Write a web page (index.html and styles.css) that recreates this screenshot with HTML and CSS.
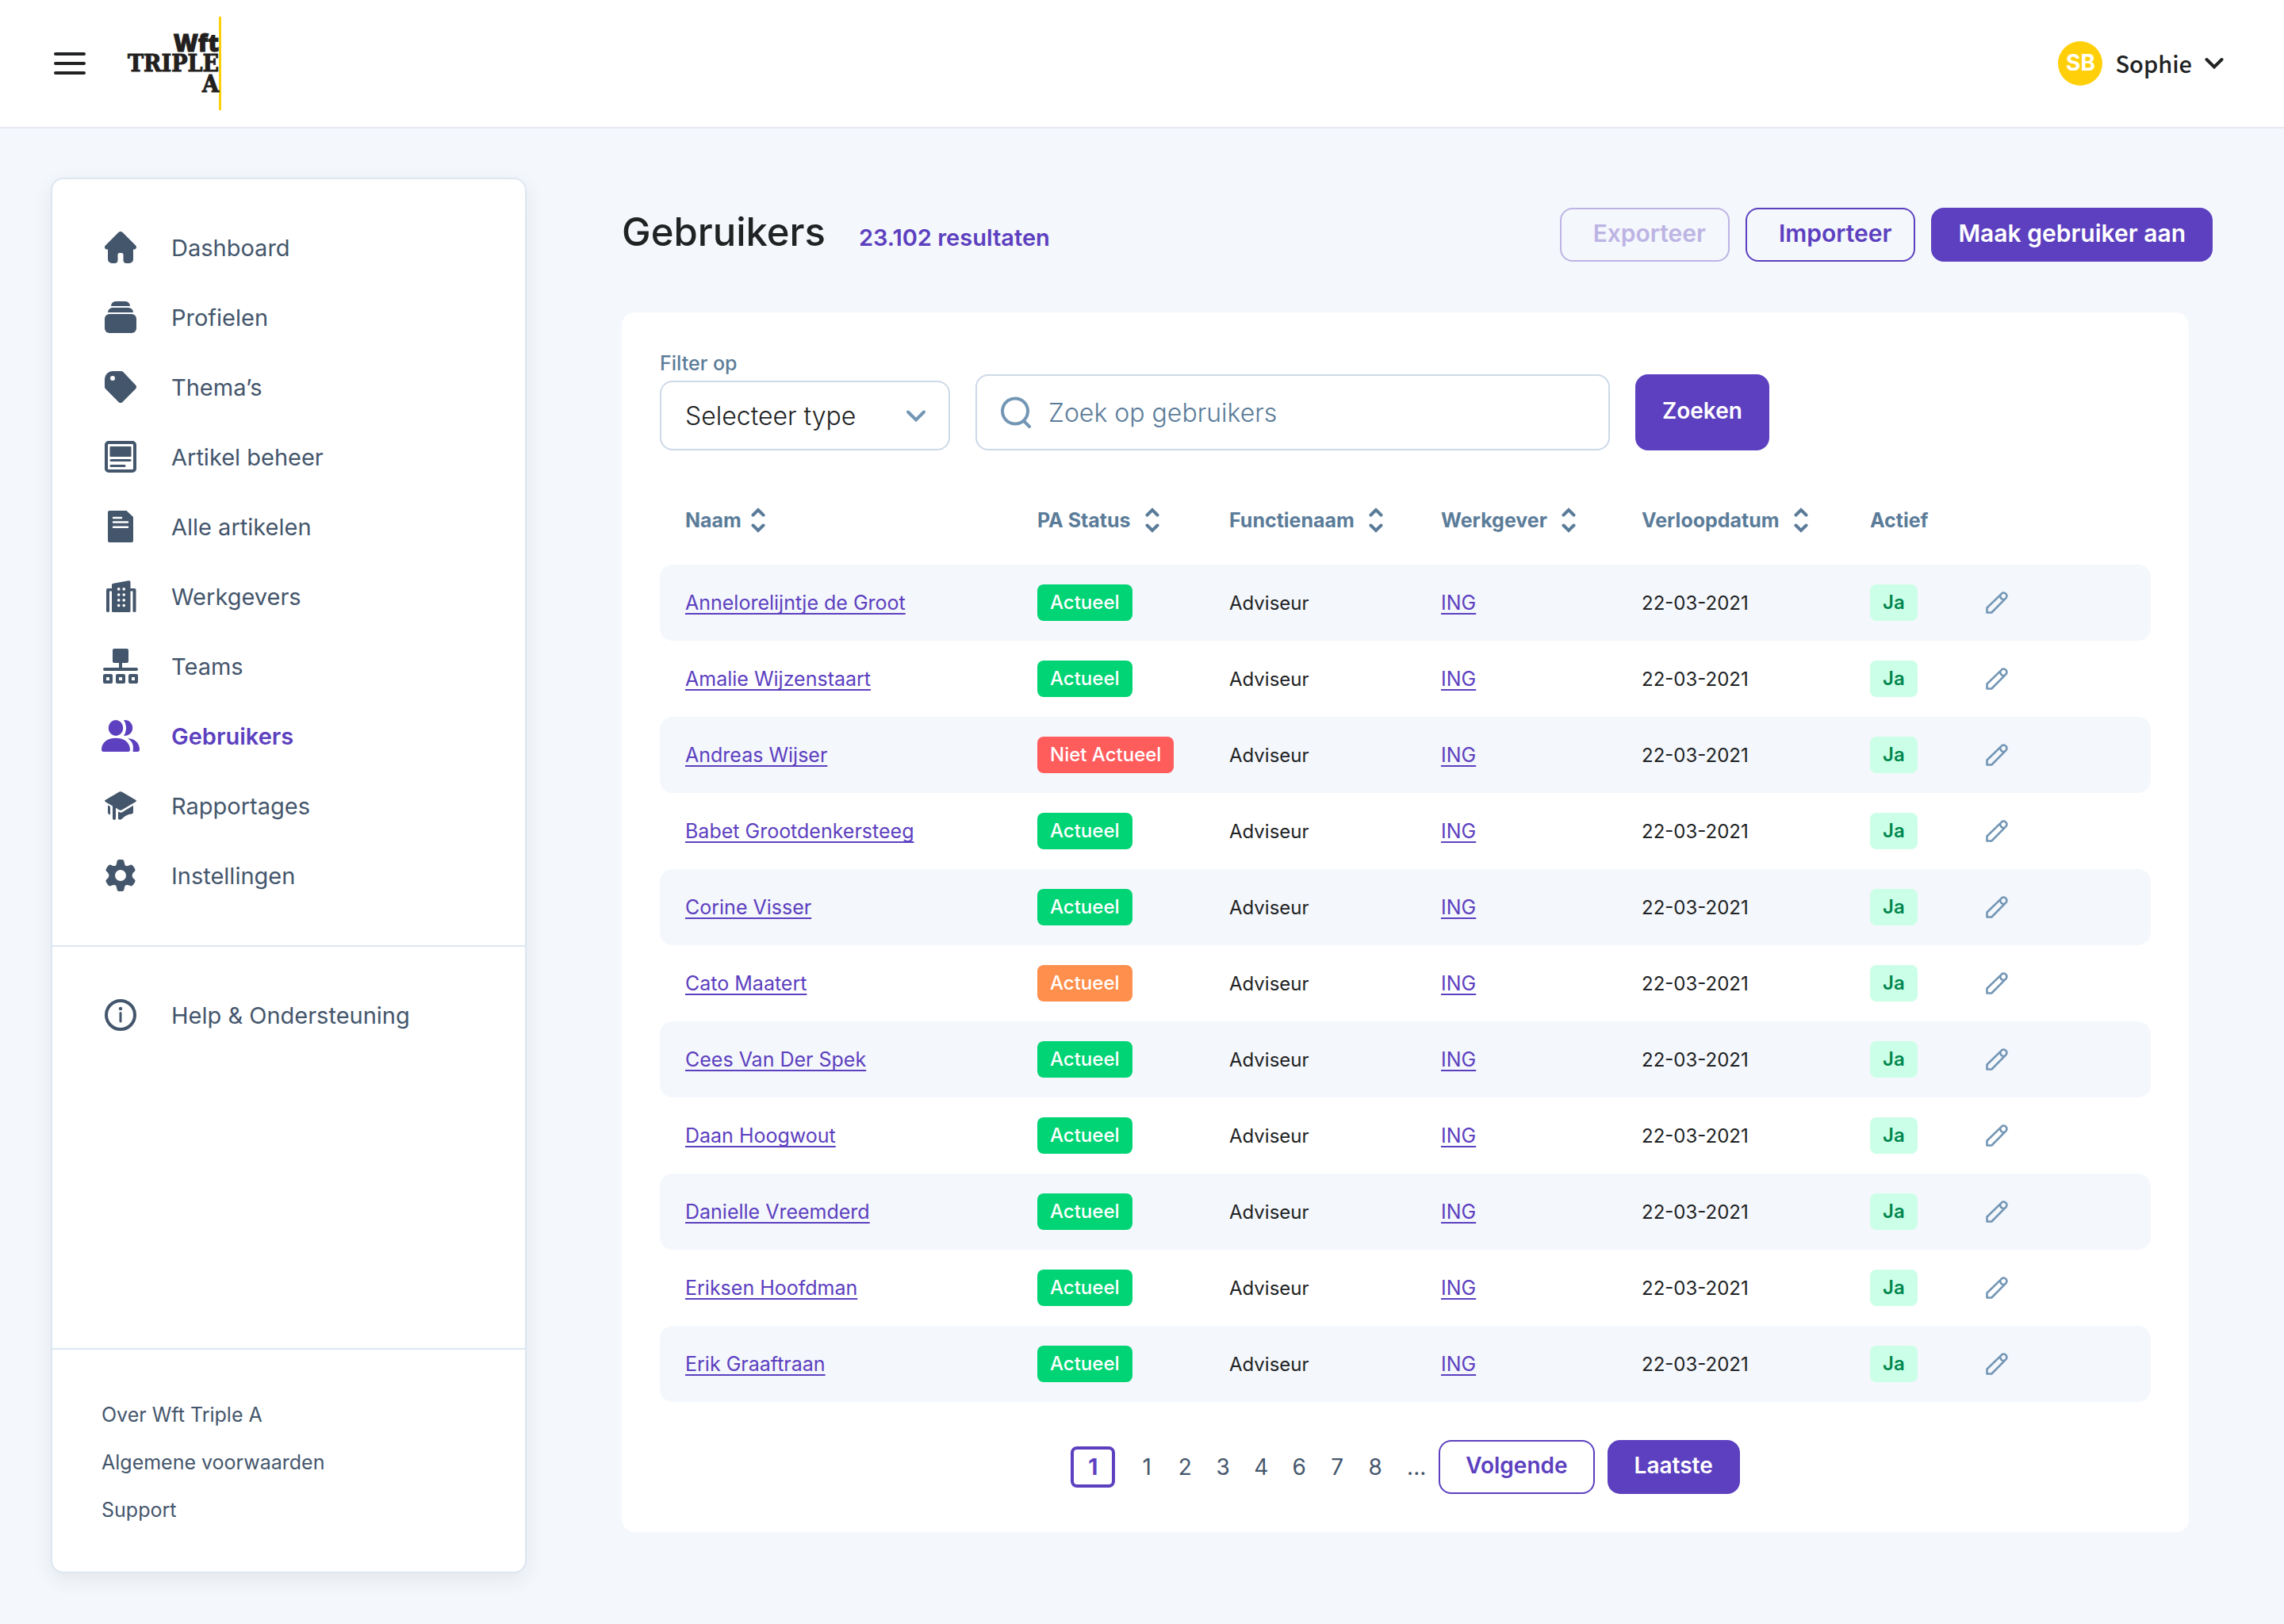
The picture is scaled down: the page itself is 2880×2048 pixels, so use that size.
FILE: index.html
```html
<!DOCTYPE html>
<html lang="nl">
<head>
    <meta charset="UTF-8">
    <meta name="viewport" content="width=device-width, initial-scale=1.0">
    <title>Gebruikers - Wft Triple A</title>
    <link rel="stylesheet" href="styles.css">
</head>
<body>
    <!-- shared icons -->
    <svg class="sprite" aria-hidden="true">
        <symbol id="icon-sort" viewBox="0 0 18 32">
            <path d="M2.5 9.5 9 3l6.5 6.5M2.5 22.5 9 29l6.5-6.5" fill="none" stroke="currentColor" stroke-width="4" stroke-linecap="round"/>
        </symbol>
        <symbol id="icon-pencil" viewBox="0 0 28 28">
            <path d="M1.5 26.5V20.5L20 2.6a3.9 3.9 0 0 1 5.5 5.5L7.3 26.5zM18.3 4.6c-.6 3.2 1.8 5.8 5 5.3" fill="none" stroke="currentColor" stroke-width="2.6" stroke-linejoin="round"/>
        </symbol>
    </svg>

    <header class="topbar">
        <button class="menu-button" aria-label="Menu">
            <svg width="40" height="28" viewBox="0 0 40 28">
                <path d="M2 2h36M2 14h36M2 26h36" stroke="currentColor" stroke-width="4" stroke-linecap="round"/>
            </svg>
        </button>
        <a href="#" class="logo">
            <span class="logo-small">Wft</span>
            <span>TRIPLE</span>
            <span>A</span>
        </a>
        <button class="user">
            <span class="avatar">SB</span>
            <span class="user-name">Sophie</span>
            <svg width="24" height="16" viewBox="0 0 24 16">
                <path d="M2.5 3 12 12.5 21.5 3" fill="none" stroke="currentColor" stroke-width="4" stroke-linecap="round"/>
            </svg>
        </button>
    </header>

    <div class="layout">
        <aside class="sidebar">
            <nav class="nav">
                <a href="#" class="nav-link">
                    <svg class="nav-icon" viewBox="0 0 48 48"><path d="M21.2 5.2a3.8 3.8 0 0 1 5.6 0L43 21.6c2 2.2.8 5-2 5h-1V39a5 5 0 0 1-5 5h-3.500a4 4 0 0 1-4-4v-7a2 2 0 0 0-2-2h-3a2 2 0 0 0-2 2v7a4 4 0 0 1-4 4H13a5 5 0 0 1-5-5V26.600H7c-2.800 0-4-2.800-2-5z"/></svg>
                    Dashboard
                </a>
                <a href="#" class="nav-link">
                    <svg class="nav-icon" viewBox="0 0 48 48"><path d="M12 10a6 6 0 0 1 6-6h12a6 6 0 0 1 6 6zM8 18a6 6 0 0 1 6-6h20a6 6 0 0 1 6 6z"/><rect x="4" y="20" width="40" height="24" rx="6"/></svg>
                    Profielen
                </a>
                <a href="#" class="nav-link">
                    <svg class="nav-icon" viewBox="0 0 48 48"><path fill-rule="evenodd" d="M14 4h10.500a4 4 0 0 1 3 1.300l15.400 16.200a3.600 3.600 0 0 1 0 5L26.500 42.900a3.600 3.600 0 0 1-5 0L5.200 26.600A4 4 0 0 1 4 24V14A10 10 0 0 1 14 4zm0 6a3 3 0 1 0 0 6 3 3 0 0 0 0-6z"/></svg>
                    Thema’s
                </a>
                <a href="#" class="nav-link">
                    <svg class="nav-icon" viewBox="0 0 48 48"><rect x="6" y="6" width="36" height="36" rx="3" fill="none" stroke="currentColor" stroke-width="4"/><rect x="10.5" y="11" width="27" height="13" rx="1"/><rect x="10.5" y="27" width="27" height="3" rx="1.5"/><rect x="10.5" y="34" width="20" height="3" rx="1.5"/></svg>
                    Artikel beheer
                </a>
                <a href="#" class="nav-link">
                    <svg class="nav-icon" viewBox="0 0 48 48"><path d="M10 4h21.5L40 12v30a2 2 0 0 1-2 2H10a2 2 0 0 1-2-2V6a2 2 0 0 1 2-2z"/><path d="M15 13h10M15 18.500h18M15 24.700h18" stroke="#fff" stroke-width="2.5" stroke-linecap="round"/></svg>
                    Alle artikelen
                </a>
                <a href="#" class="nav-link">
                    <svg class="nav-icon" viewBox="0 0 48 48"><path d="M13 9.500Q13 8 15 7.700L34 4.200Q36.500 3.800 36.500 6V14h5q2 0 2 2v26.500q0 1.500-2 1.500t-2-1.500V17.500h-3V42.500q0 1.500-1.500 1.500H14.500Q13 44 13 42.500V17.500h-3v25q0 1.500-2 1.500t-2-1.500V16q0-2 2-2h5z"/><path d="M21.7 14.800v.1M28.200 14.800v.1M21.700 22v.1M28.200 22v.1M21.700 28.800v.1M28.200 28.800v.1M21.700 35.500v.1M28.200 35.500v.1" stroke="#fff" stroke-width="3.6" stroke-linecap="round"/></svg>
                    Werkgevers
                </a>
                <a href="#" class="nav-link">
                    <svg class="nav-icon" viewBox="0 0 48 48"><rect x="14" y="2" width="20" height="18" rx="2"/><path d="M22 18h4v9h-4z"/><rect x="2" y="26" width="44" height="4" rx="2"/><path d="M4 36h8v8H4zM20 36h8v8h-8zM36 36h8v8h-8z" fill="none" stroke="currentColor" stroke-width="4" stroke-linejoin="round"/></svg>
                    Teams
                </a>
                <a href="#" class="nav-link active" aria-current="page">
                    <svg class="nav-icon" viewBox="0 0 48 48"><ellipse cx="18" cy="14" rx="9.3" ry="10"/><path d="M28 4c14.500-1 15.500 20 0 20 4-6 4-14 0-20zM18 26.800c11 0 18 6 18 14.500 0 2-.8 2.700-2.500 2.700h-31C.8 44 0 43.300 0 41.300 0 32.800 7 26.800 18 26.800zM33 27.300c9 0 15 6 15 14 0 2-.8 2.700-2.500 2.700H39.500c1.500-8-.5-13-6.500-16.700z"/></svg>
                    Gebruikers
                </a>
                <a href="#" class="nav-link">
                    <svg class="nav-icon" viewBox="0 0 48 48"><path d="M22.5 6.600q1.500-.8 3 0L43 16.800q1.800 1.200 0 2.400L25.500 29.400q-1.500.8-3 0L18 26.800V40q0 2-2 2t-2-2V24.500l-9-5.300q-1.800-1.200 0-2.400zM8 23.500l3 1.700v10q-3 0-3-3zM21 31.500q3 2 5.500.5L40 23.800v8.500q0 2-2 2.200c-5 .5-8 2-11.500 5.500q-2 3-5.500 1z"/></svg>
                    Rapportages
                </a>
                <a href="#" class="nav-link">
                    <svg class="nav-icon" viewBox="0 0 48 48">
                        <path d="M18 11.500q1-1.500 1.400-4.500.4-3 2.600-3h4q2.200 0 2.600 3 .4 3 1.400 4.500 2 1 4 .2 3-1.400 4.200-1 1.800 1 2.800 3 1.800 2.800 1.600 3.700-1 1.800-2.600 3-1.400 1.600-1.400 3.600t1.400 3.600q1.600 1.200 2.600 3 .2.900-1.600 3.700-1 2-2.800 3-1.200.4-4.200-1-2-.8-4 .2-1 1.500-1.400 4.500-.4 3-2.600 3h-4q-2.200 0-2.600-3-.4-3-1.400-4.500-2-1-4-.2-3 1.400-4.200 1-1.800-1-2.800-3-1.800-2.800-1.600-3.700 1-1.800 2.600-3Q9.400 26 9.400 24T8 20.400q-1.600-1.200-2.600-3-.2-.9 1.600-3.700 1-2 2.800-3 1.200-.4 4.200 1 2 .8 4-.2z"/>
                        <circle cx="24" cy="24" r="7" fill="#fff"/>
                    </svg>
                    Instellingen
                </a>
            </nav>
            <nav class="nav nav-help">
                <a href="#" class="nav-link">
                    <svg class="nav-icon" viewBox="0 0 48 48"><circle cx="24" cy="24" r="18" fill="none" stroke="currentColor" stroke-width="4"/><circle cx="24" cy="16" r="2.2"/><path d="M24 21.500v10.500" stroke="currentColor" stroke-width="3" stroke-linecap="round"/></svg>
                    Help &amp; Ondersteuning
                </a>
            </nav>
            <div class="sidebar-footer">
                <a href="#">Over Wft Triple A</a>
                <a href="#">Algemene voorwaarden</a>
                <a href="#">Support</a>
            </div>
        </aside>

        <main class="content">
            <div class="page-head">
                <h1>Gebruikers</h1>
                <span class="count">23.102 resultaten</span>
                <div class="actions">
                    <button class="btn btn-outline btn-icon" disabled>Exporteer</button>
                    <button class="btn btn-outline btn-icon">Importeer</button>
                    <button class="btn">Maak gebruiker aan</button>
                </div>
            </div>

            <section class="card">
                <form class="filters">
                    <div class="field">
                        <label for="type">Filter op</label>
                        <div class="select-wrap">
                            <select id="type">
                                <option>Selecteer type</option>
                            </select>
                            <svg width="26" height="18" viewBox="0 0 26 18">
                                <path d="M3 3.500 13 13.500 23 3.500" fill="none" stroke="currentColor" stroke-width="4" stroke-linecap="round"/>
                            </svg>
                        </div>
                    </div>
                    <div class="search">
                        <svg width="40" height="40" viewBox="0 0 40 40">
                            <path d="M18 2.500a16 16 0 1 1 0 32 16 16 0 0 1 0-32zM28.500 30.500l7.500 7.500" fill="none" stroke="currentColor" stroke-width="4" stroke-linecap="round"/>
                        </svg>
                        <input type="text" placeholder="Zoek op gebruikers" aria-label="Zoek op gebruikers">
                    </div>
                    <button type="button" class="btn btn-search">Zoeken</button>
                </form>

                <table class="users">
                    <colgroup>
                        <col class="col-name">
                        <col class="col-status">
                        <col class="col-role">
                        <col class="col-employer">
                        <col class="col-date">
                        <col class="col-active">
                        <col>
                    </colgroup>
                    <thead>
                        <tr>
                            <th><button class="sort sort-near">Naam <svg><use href="#icon-sort"/></svg></button></th>
                            <th><button class="sort">PA Status <svg><use href="#icon-sort"/></svg></button></th>
                            <th><button class="sort">Functienaam <svg><use href="#icon-sort"/></svg></button></th>
                            <th><button class="sort">Werkgever <svg><use href="#icon-sort"/></svg></button></th>
                            <th><button class="sort">Verloopdatum <svg><use href="#icon-sort"/></svg></button></th>
                            <th>Actief</th>
                            <th></th>
                        </tr>
                    </thead>
                    <tbody id="rows"></tbody>
                </table>

                <nav class="pagination" aria-label="Paginering">
                    <a href="#" class="page current" aria-current="page">1</a>
                    <a href="#" class="page">1</a>
                    <a href="#" class="page">2</a>
                    <a href="#" class="page">3</a>
                    <a href="#" class="page">4</a>
                    <a href="#" class="page">6</a>
                    <a href="#" class="page">7</a>
                    <a href="#" class="page">8</a>
                    <span class="page dots">...</span>
                    <button class="btn btn-outline">Volgende</button>
                    <button class="btn">Laatste</button>
                </nav>
            </section>
        </main>
    </div>

    <script>
        const users = [
            ['Annelorelijntje de Groot', 'green', 'Actueel'],
            ['Amalie Wijzenstaart', 'green', 'Actueel'],
            ['Andreas Wijser', 'red', 'Niet Actueel'],
            ['Babet Grootdenkersteeg', 'green', 'Actueel'],
            ['Corine Visser', 'green', 'Actueel'],
            ['Cato Maatert', 'orange', 'Actueel'],
            ['Cees Van Der Spek', 'green', 'Actueel'],
            ['Daan Hoogwout', 'green', 'Actueel'],
            ['Danielle Vreemderd', 'green', 'Actueel'],
            ['Eriksen Hoofdman', 'green', 'Actueel'],
            ['Erik Graaftraan', 'green', 'Actueel']
        ];

        document.getElementById('rows').innerHTML = users.map(([name, color, status]) => `
            <tr>
                <td><a href="#">${name}</a></td>
                <td><span class="badge ${color}">${status}</span></td>
                <td>Adviseur</td>
                <td><a href="#">ING</a></td>
                <td>22-03-2021</td>
                <td><span class="badge yes">Ja</span></td>
                <td><button class="edit" aria-label="Bewerk ${name}"><svg><use href="#icon-pencil"/></svg></button></td>
            </tr>`).join('');
    </script>
</body>
</html>
```
FILE: styles.css
```css
* {
    box-sizing: border-box;
}

body {
    display: flex;
    flex-direction: column;
    min-height: 100vh;
    margin: 0;
    background-color: #f4f7fc;
    color: #202223;
    font-family: Inter, "Open Sans", sans-serif;
    font-size: 25px;
}

a {
    color: inherit;
    text-decoration: none;
}

button,
input,
select {
    font: inherit;
    color: inherit;
}

button {
    padding: 0;
    border: none;
    background: none;
    cursor: pointer;
}

.sprite {
    display: none;
}

/* top bar */

.topbar {
    display: flex;
    align-items: center;
    height: 162px;
    padding: 0 76px 0 68px;
    border-bottom: 2px solid #e6e9f0;
    background-color: #ffffff;
}

.menu-button,
.user {
    display: flex;
    align-items: center;
}

.logo {
    display: flex;
    flex-direction: column;
    justify-content: center;
    align-items: flex-end;
    width: 118px;
    height: 118px;
    margin-left: 53px;
    border-right: 3px solid #ffd00a;
    color: #231f20;
    font-family: "DejaVu Serif Condensed", "DejaVu Serif", serif;
    font-size: 30px;
    font-weight: bold;
    line-height: 26px;
    -webkit-text-stroke: 1px #231f20;
}

.logo .logo-small {
    font-family: "Open Sans", sans-serif;
    font-weight: 800;
}

.user {
    gap: 16px;
    margin-left: auto;
}

.avatar {
    width: 56px;
    height: 56px;
    border-radius: 50%;
    background-color: #ffd00a;
    color: #ffffff;
    font-size: 28px;
    font-weight: 700;
    line-height: 54px;
    text-align: center;
}

.user-name {
    padding-bottom: 2px;
    font-family: "Noto Sans CJK JP", "Noto Sans", sans-serif;
    font-size: 29px;
    font-weight: 500;
    line-height: 40px;
}

/* layout */

.layout {
    display: flex;
    flex: 1;
    gap: 120px;
    padding: 62px 90px 64px 64px;
}

.sidebar {
    display: flex;
    flex-direction: column;
    flex: 0 0 600px;
    border: 2px solid #dce7f2;
    border-radius: 16px;
    background-color: #ffffff;
    box-shadow: 0 8px 24px rgba(32, 34, 35, 0.08);
    color: #44566c;
}

.nav {
    display: flex;
    flex-direction: column;
    padding: 42px 62px 44px;
}

.nav-help {
    border-top: 2px solid #dce7f2;
}

.nav-link {
    display: flex;
    align-items: center;
    gap: 40px;
    height: 88px;
    font-size: 29px;
}

.nav-link.active {
    color: #5c40bf;
    font-weight: 600;
}

.nav-icon {
    width: 48px;
    height: 48px;
    fill: currentColor;
}

.sidebar-footer {
    display: flex;
    flex-direction: column;
    margin-top: auto;
    padding: 52px 62px 48px;
    border-top: 2px solid #dce7f2;
    line-height: 60px;
}

.content {
    flex: 1;
    padding-top: 38px;
}

.page-head {
    display: flex;
    align-items: baseline;
    gap: 42px;
}

h1 {
    margin: 0;
    font-size: 49px;
    font-weight: 500;
    line-height: 62px;
}

.count {
    color: #5c40bf;
    font-size: 29px;
    font-weight: 600;
}

.actions {
    display: flex;
    align-self: center;
    gap: 20px;
    margin-left: auto;
}

.btn {
    height: 68px;
    padding: 0 32px 4px;
    border: 2px solid #5c40bf;
    border-radius: 16px;
    background-color: #5c40bf;
    color: #ffffff;
    font-size: 28px;
    font-weight: 600;
}

.actions .btn {
    font-size: 30px;
}

.btn-outline {
    background-color: transparent;
    color: #5c40bf;
}

.btn-icon {
    padding-left: 40px;
    padding-right: 28px;
}

.btn:disabled {
    border-color: #bdb4e4;
    color: #bdb4e4;
}

/* card */

.card {
    margin: 64px 30px 0 0;
    padding: 48px;
    border-radius: 16px;
    background-color: #ffffff;
}

.filters {
    display: flex;
    align-items: flex-end;
    gap: 32px;
    margin-bottom: 32px;
}

.field label {
    display: block;
    margin-bottom: 6px;
    color: #5b7c99;
    font-weight: 500;
    line-height: 32px;
}

.select-wrap {
    position: relative;
    width: 366px;
    color: #7396b5;
}

.select-wrap select {
    width: 100%;
    height: 88px;
    padding: 0 30px;
    border: 2px solid #cdd9e8;
    border-radius: 16px;
    background-color: #ffffff;
    color: #202223;
    font-size: 32px;
    font-weight: 300;
    appearance: none;
}

.select-wrap svg {
    position: absolute;
    top: 36px;
    right: 30px;
    pointer-events: none;
}

.search {
    display: flex;
    align-items: center;
    gap: 20px;
    flex: 0 1 800px;
    height: 96px;
    padding: 0 30px;
    border: 2px solid #cdd9e8;
    border-radius: 16px;
    color: #7396b5;
}

.search input {
    flex: 1;
    padding: 0;
    border: none;
    outline: none;
    background: none;
    font-size: 32px;
    font-weight: 300;
}

.search input::placeholder {
    color: #5b7c99;
    opacity: 1;
}

.btn-search {
    height: 96px;
}

/* table */

.users {
    width: 100%;
    border-collapse: collapse;
    table-layout: fixed;
}

.col-name {
    width: 476px;
}

.col-status {
    width: 242px;
}

.col-role {
    width: 267px;
}

.col-employer {
    width: 253px;
}

.col-date {
    width: 288px;
}

.col-active {
    width: 146px;
}

.users th,
.users td {
    padding: 0;
    text-align: left;
    white-space: nowrap;
}

.users th {
    height: 112px;
    color: #5b7c99;
    font-weight: 700;
}

.users td {
    height: 96px;
    font-size: 24px;
}

.users th:first-child,
.users td:first-child {
    padding-left: 32px;
    border-radius: 16px 0 0 16px;
}

.users td:last-child {
    border-radius: 0 16px 16px 0;
}

.users tbody tr:nth-child(odd) td {
    background-color: #f4f7fc;
}

.users a {
    color: #5c40bf;
    font-size: 25px;
    text-decoration: underline;
    text-decoration-thickness: 2px;
    text-decoration-skip-ink: none;
    text-underline-offset: 4px;
}

.sort {
    display: flex;
    align-items: center;
    gap: 18px;
}

.sort-near {
    gap: 12px;
}

.sort svg {
    width: 18px;
    height: 32px;
}

.badge {
    display: inline-block;
    padding: 0 16px;
    border-radius: 8px;
    color: #ffffff;
    font-weight: 500;
    line-height: 46px;
}

.green {
    background-color: #00d474;
}

.red {
    background-color: #ff5c5c;
}

.orange {
    background-color: #ff8f4c;
}

.yes {
    background-color: #ccffe7;
    color: #00864e;
    font-weight: 600;
}

.edit {
    display: flex;
    color: #7396b5;
}

.edit svg {
    width: 28px;
    height: 28px;
}

/* pagination */

.pagination {
    display: flex;
    align-items: center;
    justify-content: center;
    margin-top: 48px;
    color: #44566c;
    font-size: 28px;
}

.page {
    width: 48px;
    line-height: 44px;
    text-align: center;
}

.page.current {
    width: 56px;
    margin-right: 16px;
    border: 4px solid #5c40bf;
    border-radius: 8px;
    color: #5c40bf;
    font-weight: 700;
}

.page.dots {
    width: 56px;
}

.pagination .btn + .btn {
    margin-left: 16px;
}
```
